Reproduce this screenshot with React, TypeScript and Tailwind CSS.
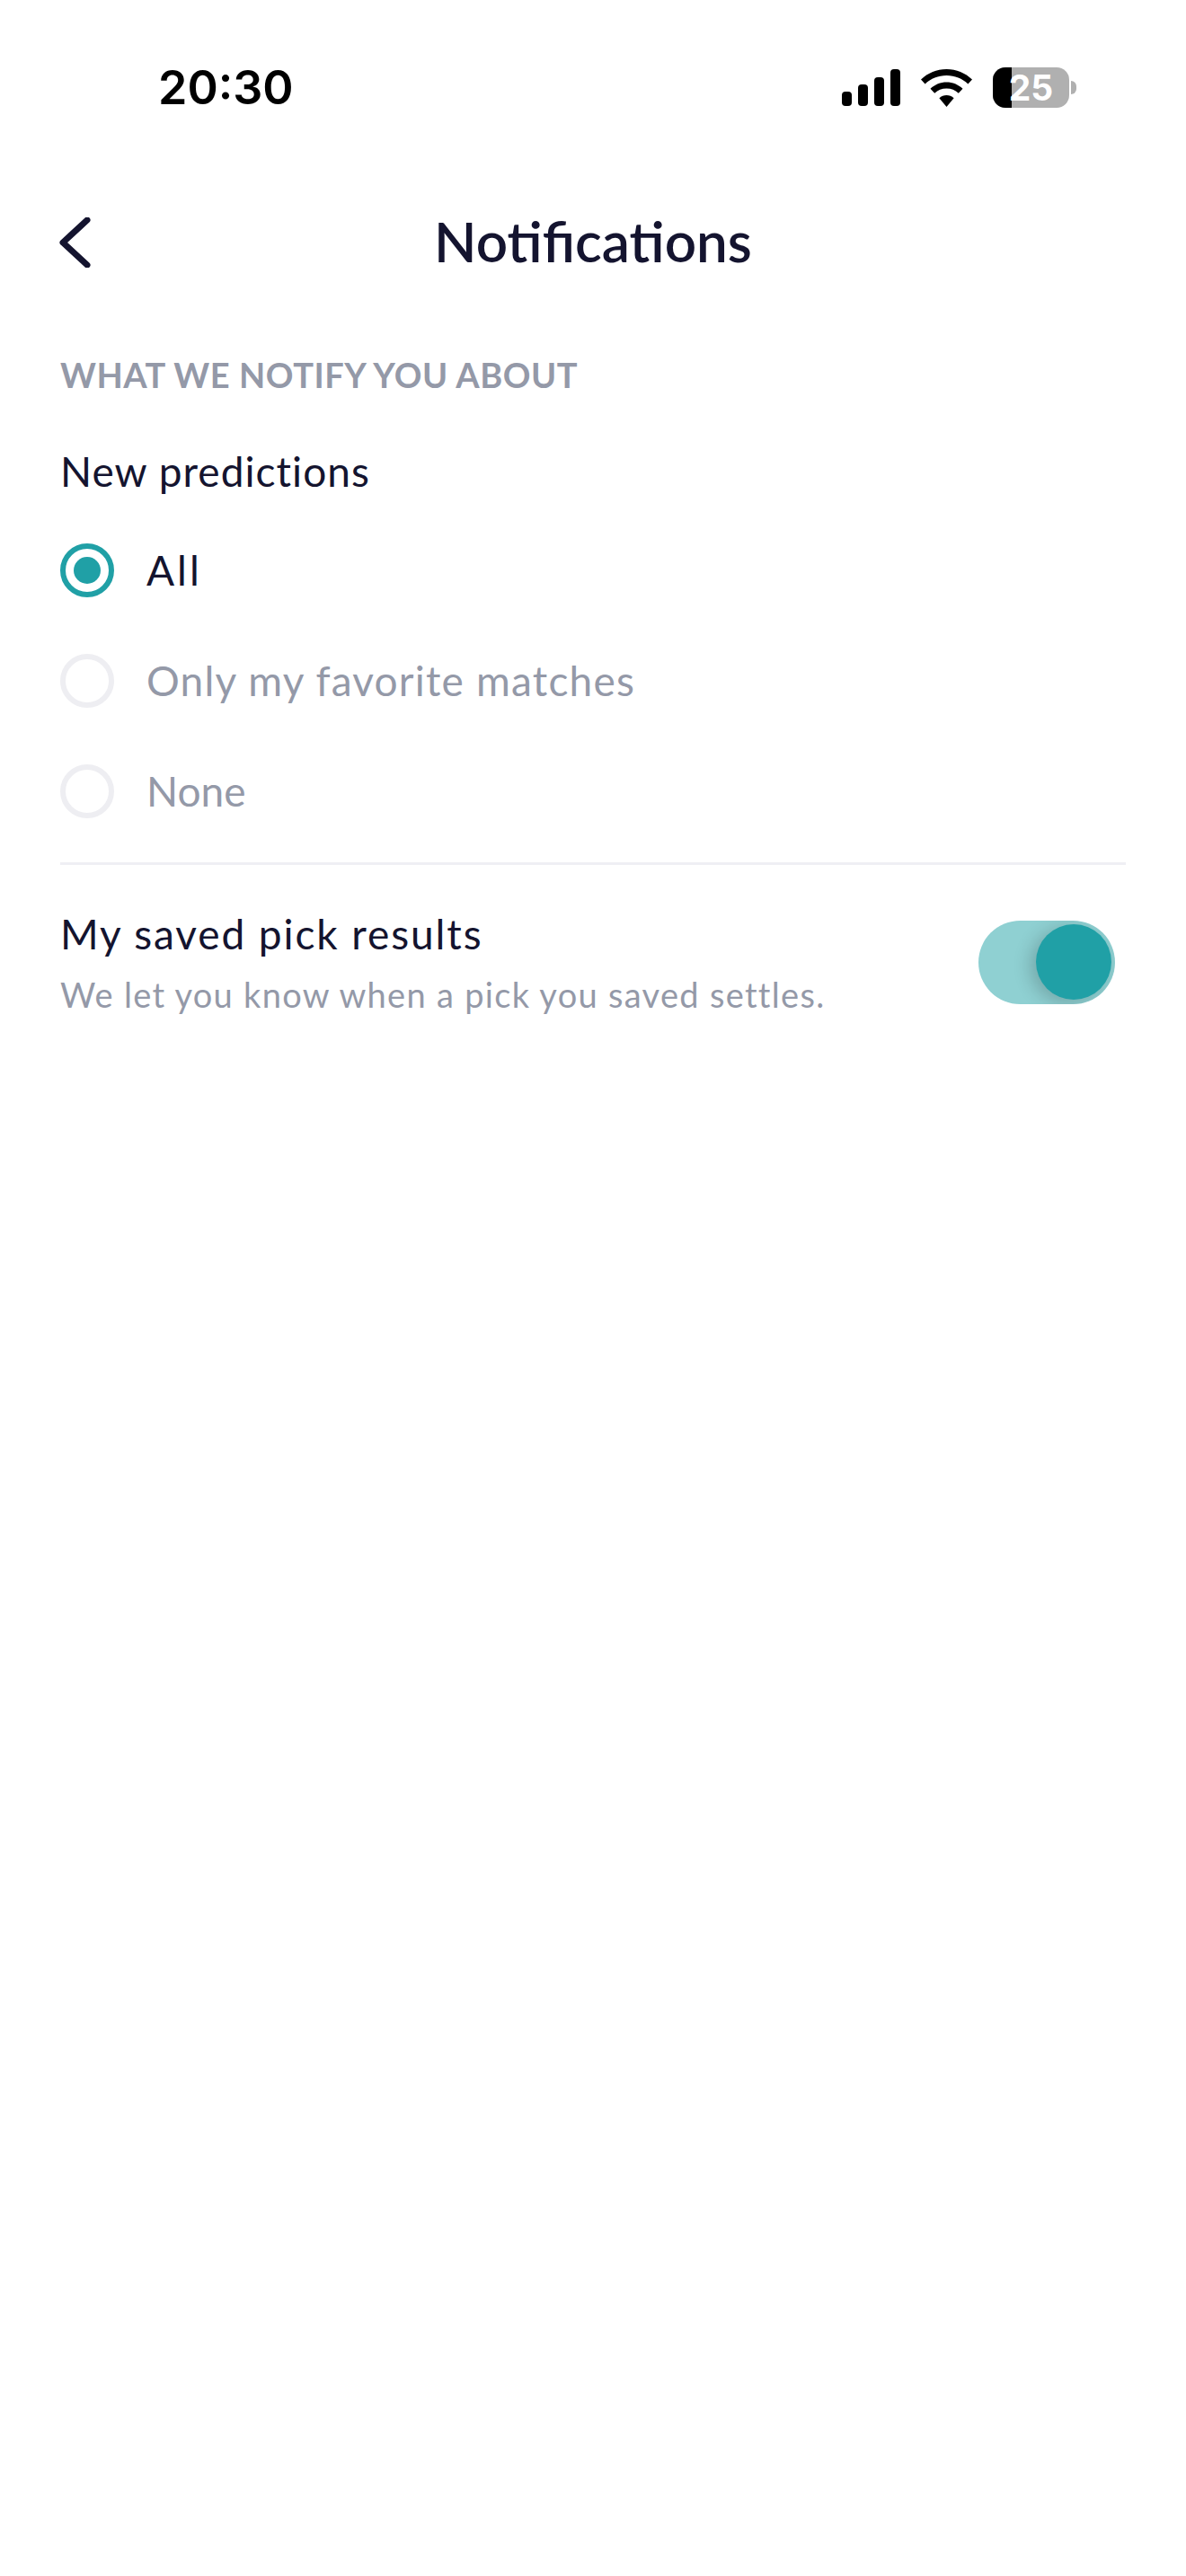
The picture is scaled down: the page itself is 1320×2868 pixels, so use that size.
import React from 'react';

const Radio = ({ label, selected, spacing }: { label: string; selected?: boolean; spacing: string }) => (
  <div className="flex items-center h-[60px] gap-[36px]">
    {selected ? (
      <div className="w-[60px] h-[60px] rounded-full border-[6px] border-[#20a0a6] flex items-center justify-center shrink-0">
        <div className="w-[30px] h-[30px] rounded-full bg-[#20a0a6]"></div>
      </div>
    ) : (
      <div className="w-[60px] h-[60px] rounded-full border-[6px] border-[#eeeef2] shrink-0"></div>
    )}
    <span className={`text-[46px] leading-[60px] ${spacing} ${selected ? 'text-[#14142f]' : 'text-[#9499a8]'}`}>{label}</span>
  </div>
);

const StatusBar = () => (
  <div className="flex items-center justify-between h-[45px] mt-[75px] pl-[176px] pr-[122px]">
    <span className="text-[52px] leading-[45px] font-semibold text-black font-['Inter',sans-serif]">20:30</span>
    <div className="flex items-center">
      <svg width="65" height="41" viewBox="0 0 65 41" className="mr-[23px]">
        <rect x="0" y="25" width="11" height="16" rx="4" fill="#000" />
        <rect x="18" y="17" width="11" height="24" rx="4" fill="#000" />
        <rect x="36" y="9" width="11" height="32" rx="4" fill="#000" />
        <rect x="54" y="0" width="11" height="41" rx="4" fill="#000" />
      </svg>
      <svg width="57" height="42" viewBox="0 0 57 42" className="mr-[23px]">
        <path d="M28.5 0C17.5 0 7.8 4.200 0 11.500L4.600 16.500C11 10.500 19.200 7 28.500 7C37.800 7 46 10.500 52.400 16.500L57 11.500C49.200 4.200 39.500 0 28.500 0Z" fill="#000" />
        <path d="M28.500 14.500C21.800 14.500 15.500 17 10.500 21.800L15.200 26.800C18.800 23.400 23.400 21.500 28.500 21.500C33.600 21.500 38.200 23.400 41.800 26.800L46.500 21.800C41.500 17 35.200 14.500 28.500 14.500Z" fill="#000" />
        <path d="M28.500 29C25.500 29 22.700 30.100 20.400 32.300L28.500 42L36.600 32.300C34.300 30.100 31.500 29 28.500 29Z" fill="#000" />
      </svg>
      <div className="relative w-[85px] h-[45px] rounded-[14px] bg-[#b0b0b0] overflow-hidden flex items-center justify-center">
        <div className="absolute left-0 top-0 bottom-0 w-[21px] bg-black"></div>
        <span className="relative text-[39px] leading-[45px] font-bold text-white font-['Inter',sans-serif]">25</span>
      </div>
      <div className="w-[6px] h-[15px] ml-[2px] rounded-r-full bg-[#b0b0b0]"></div>
    </div>
  </div>
);

export default function App() {
  return (
    <div className="w-[1320px] h-[2868px] bg-white font-['Lato','Noto_Sans',sans-serif]">
      <StatusBar />

      <div className="relative flex items-center justify-center h-[60px] mt-[118px] px-[67px]">
        <svg width="36" height="56" viewBox="0 0 36 56" fill="none" className="absolute left-[66px] top-[4px]">
          <path d="M31 3L4 28L31 53" stroke="#14142f" strokeWidth="7" strokeLinecap="round" strokeLinejoin="round" />
        </svg>
        <h1 className="text-[62px] leading-[60px] font-semibold text-[#14142f]">Notifications</h1>
      </div>

      <div className="px-[67px] mt-[96px]">
        <div className="text-[38px] leading-[46px] font-bold tracking-[0.55px] text-[#9499a8]">WHAT WE NOTIFY YOU ABOUT</div>

        <div className="mt-[56px] text-[46px] leading-[58px] tracking-[1.05px] text-[#14142f]">New predictions</div>

        <div className="flex flex-col gap-[63px] mt-[51px]">
          <Radio label="All" selected spacing="tracking-[3px]" />
          <Radio label="Only my favorite matches" spacing="tracking-[1.2px]" />
          <Radio label="None" spacing="tracking-[0px]" />
        </div>

        <div className="h-[3px] bg-[#efeff4] mt-[49px]"></div>

        <div className="flex items-center justify-between mt-[48px] pr-[12px]">
          <div>
            <div className="text-[46px] leading-[58px] tracking-[1.9px] text-[#14142f]">My saved pick results</div>
            <div className="mt-[14px] text-[38px] leading-[48px] tracking-[1.3px] text-[#9499a8]">We let you know when a pick you saved settles.</div>
          </div>
          <div className="flex items-center justify-end w-[152px] h-[93px] rounded-full bg-[#8fd0d2] pr-[4px] overflow-hidden">
            <div className="w-[84px] h-[84px] rounded-full bg-[#20a0a6] shadow-[-6px_4px_20px_rgba(0,0,0,0.2)]"></div>
          </div>
        </div>
      </div>
    </div>
  );
}
